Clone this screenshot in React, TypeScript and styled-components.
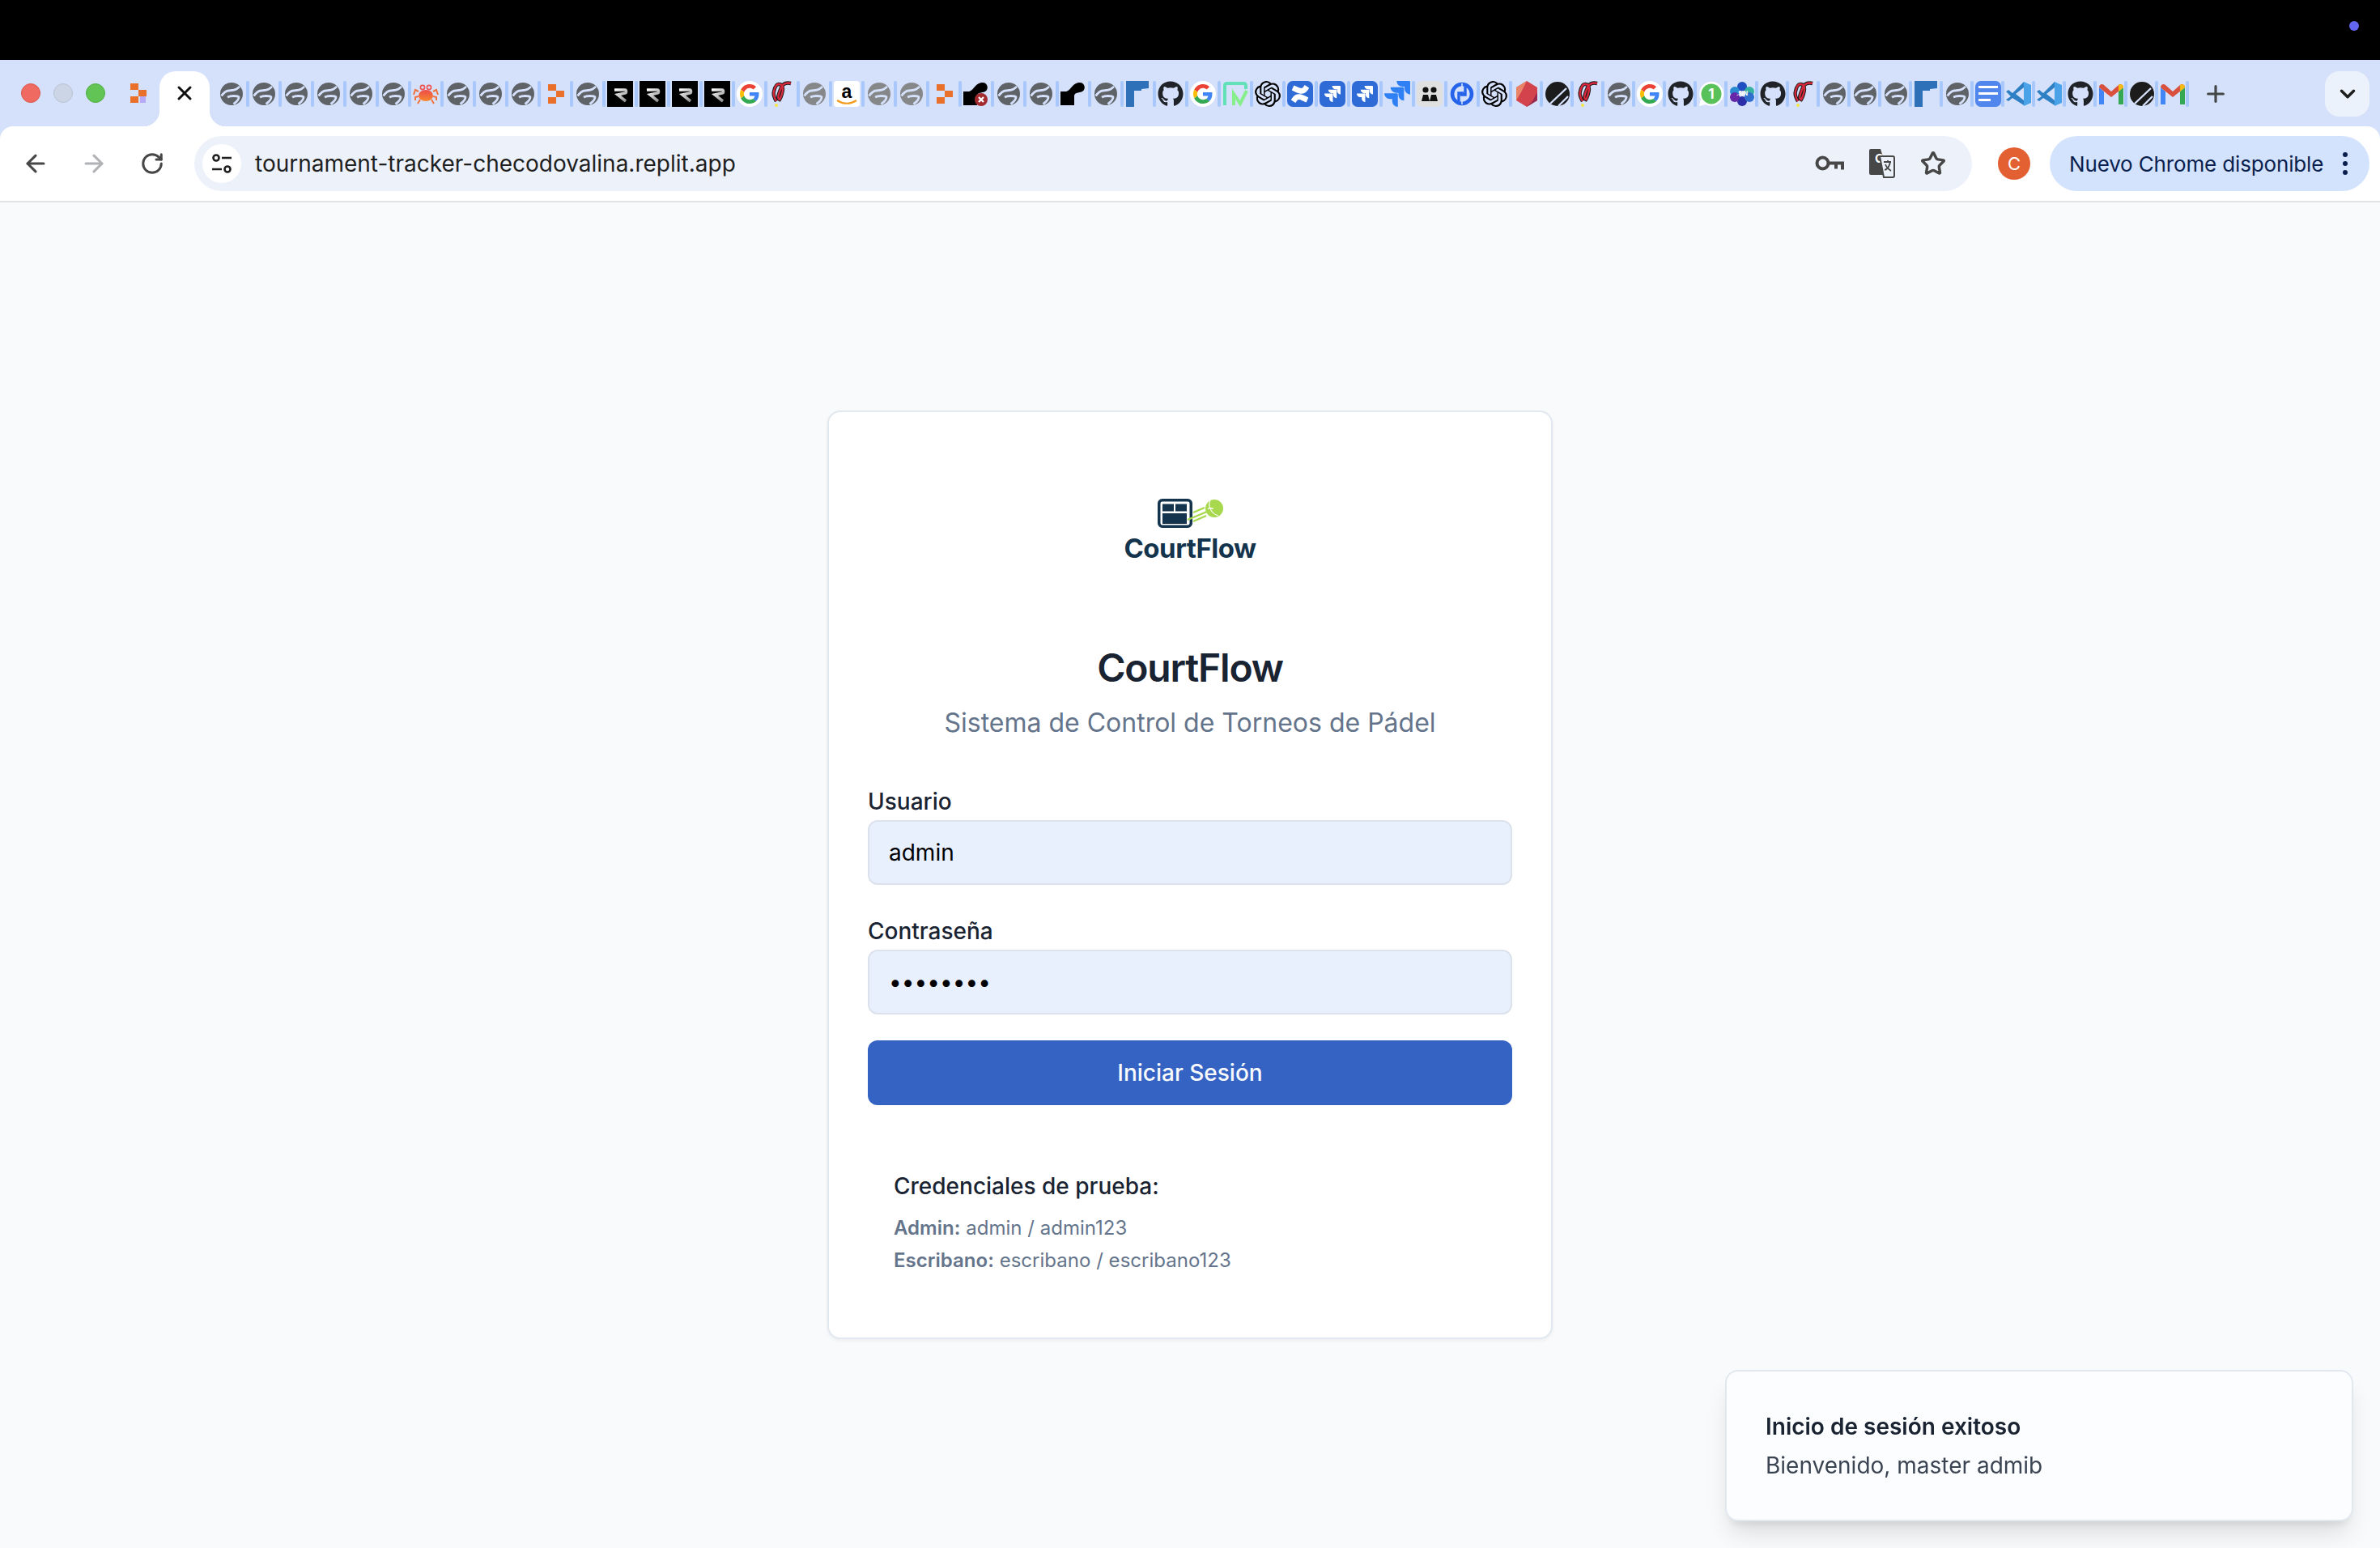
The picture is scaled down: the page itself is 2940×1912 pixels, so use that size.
import React from "react";
import styled, { createGlobalStyle } from "styled-components";
import { ArrowLeft, ArrowRight, RotateCw, Star, Plus, ChevronDown, X } from "lucide-react";
import { FaGithub } from "react-icons/fa";
import { SiOpenai, SiJira, SiConfluence } from "react-icons/si";

const GlobalStyle = createGlobalStyle`
	* {
		box-sizing: border-box;
	}
	html,
	body {
		margin: 0;
		padding: 0;
		background: #f9fafb;
		font-family: Inter, "Liberation Sans", sans-serif;
	}
`;

/* ---- favicons ---- */

const Svg = styled.svg`
	display: block;
	width: 32px;
	height: 32px;
`;

const Globe = ({ dim }: { dim?: boolean }) => (
	<Svg viewBox="0 0 32 32">
		<circle cx="16" cy="16" r="14" fill={dim ? "#858789" : "#5f6368"} />
		<path d="M3.6 18.5C6 15 9 12.5 12 12c3-.5 7 0 10-2l4-3" fill="none" stroke="#d5e1fb" strokeWidth="2.8" />
		<path d="M11 20c3-1.5 5-1.5 7.5-1.5 3 0 6 .5 6.5 1.5 0 3-3 6-6.5 8.5" fill="none" stroke="#d5e1fb" strokeWidth="2.8" />
	</Svg>
);

const Blocks = ({ lilac }: { lilac?: boolean }) => (
	<Svg viewBox="0 0 32 32">
		<rect x="7" y="4" width="10" height="8" fill="#e8702a" />
		<rect x="17" y="12" width="10" height="8" fill="#e8702a" />
		<rect x="7" y="20" width="10" height="8" fill="#e8702a" />
		{lilac && <rect x="19" y="20" width="7" height="8" fill="#b6a9f7" />}
	</Svg>
);

const Crab = () => (
	<Svg viewBox="0 0 32 32">
		<defs>
			<linearGradient id="crab" x1="0" y1="0" x2="0" y2="1">
				<stop offset="0" stopColor="#ef4b4b" />
				<stop offset="1" stopColor="#f58a2e" />
			</linearGradient>
		</defs>
		<ellipse cx="16" cy="18" rx="9" ry="7" fill="url(#crab)" />
		<circle cx="12" cy="8" r="2.6" fill="none" stroke="#ef5350" strokeWidth="1.6" />
		<circle cx="20" cy="8" r="2.6" fill="none" stroke="#ef5350" strokeWidth="1.6" />
		<path d="M7 13 3 11 1 17M25 13l4-2 2 6M7 19l-4 1v4M25 19l4 1v4M9 23l-3 5M23 23l3 5" fill="none" stroke="#f2703a" strokeWidth="2" />
	</Svg>
);

const RTile = () => (
	<Svg viewBox="0 0 32 32">
		<defs>
			<linearGradient id="rtile" x1="0" y1="0" x2="1" y2="1">
				<stop offset="0" stopColor="#ffffff" />
				<stop offset="1" stopColor="#8f8f8f" />
			</linearGradient>
		</defs>
		<rect width="32" height="32" fill="#000" />
		<path d="M9 11h13c2 0 2 4 0 4l-9 2 10 8" fill="none" stroke="url(#rtile)" strokeWidth="3.6" />
	</Svg>
);

const GoogleG = () => (
	<Svg viewBox="-8 -8 64 64">
		<circle cx="24" cy="24" r="32" fill="#fff" />
		<path fill="#EA4335" d="M24 9.5c3.54 0 6.71 1.22 9.21 3.6l6.85-6.85C35.9 2.38 30.47 0 24 0 14.62 0 6.51 5.38 2.56 13.22l7.98 6.19C12.43 13.72 17.74 9.5 24 9.5z" />
		<path fill="#4285F4" d="M46.98 24.55c0-1.57-.15-3.09-.38-4.55H24v9.02h12.94c-.58 2.96-2.26 5.48-4.78 7.18l7.73 6c4.51-4.18 7.09-10.36 7.09-17.65z" />
		<path fill="#FBBC05" d="M10.53 28.59c-.48-1.45-.76-2.99-.76-4.59s.27-3.14.76-4.59l-7.98-6.19C.92 16.46 0 20.12 0 24c0 3.88.92 7.54 2.56 10.78l7.97-6.19z" />
		<path fill="#34A853" d="M24 48c6.48 0 11.93-2.13 16.06-5.81l-7.73-6c-2.15 1.45-4.92 2.3-8.33 2.3-6.26 0-11.57-4.22-13.47-9.91l-7.98 6.19C6.51 42.62 14.62 48 24 48z" />
	</Svg>
);

const swirlPath = "M9 25C6 20 5 16 6 13 7 8 9 4 12 4c4 0 5 3 5 6s-2 10-4 13c-2-1-2-4-1-7s3-9 5-11 6-3 10-2";

const Swirl = () => (
	<Svg viewBox="0 0 32 32">
		<path d={swirlPath} fill="none" stroke="#1d1d1d" strokeWidth="4.4" />
		<path d={swirlPath} fill="none" stroke="#d8283c" strokeWidth="2.4" />
		<circle cx="9" cy="30" r="2" fill="#f5e642" />
	</Svg>
);

const Amazon = () => (
	<Svg viewBox="0 0 32 32">
		<rect width="32" height="32" rx="4" fill="#fff" />
		<text x="16" y="21" textAnchor="middle" fontSize="23" fontWeight="700" fontFamily="Liberation Sans">a</text>
		<path d="M4 24c8 5 16 5 24 0" fill="none" stroke="#f39c1f" strokeWidth="2.2" />
	</Svg>
);

const Render = ({ failed }: { failed?: boolean }) => (
	<Svg viewBox="0 0 32 32">
		<path d="M0 30V13h6c7 0 8-11 18-11 6 0 8 8 3 11-5 2-9 1-10 5v12z" fill="#000" />
		{failed && <circle cx="22" cy="23" r="8" fill="#a32a2e" />}
		{failed && <path d="M19 20l6 6M25 20l-6 6" stroke="#fff" strokeWidth="2.4" />}
	</Svg>
);

const Steps = () => (
	<Svg viewBox="0 0 32 32">
		<path d="M1 0h28v9l-9 1v2h-9v20H1z" fill="#2f71b8" />
	</Svg>
);

const Outline = () => (
	<Svg viewBox="0 0 32 32">
		<path d="M3 30V6q0-3 3-3h20q3 0 3 3v4" fill="none" stroke="#62e0b8" strokeWidth="4" />
		<path d="M14 30V16l8 12 8-16" fill="none" stroke="#86ee8a" strokeWidth="4" />
	</Svg>
);

const OpenAi = () => (
	<Svg as={SiOpenai} color="#000" />
);

const Tile = styled.div<{ $bg: string }>`
	width: 32px;
	height: 32px;
	border-radius: 7px;
	background: ${(p) => p.$bg};
	color: #fff;
	display: flex;
	align-items: center;
	justify-content: center;
`;

const People = () => (
	<Tile $bg="#e0e0e0">
		<svg width="22" height="22" viewBox="0 0 22 22">
			<circle cx="6" cy="6" r="3.6" fill="#111" />
			<circle cx="16" cy="6" r="3.6" fill="#111" />
			<path d="M1 20l2-8h6l2 8zM11 20l2-8h6l2 8z" fill="#111" />
		</svg>
	</Tile>
);

const RingG = () => (
	<Svg viewBox="0 0 32 32">
		<circle cx="16" cy="16" r="12" fill="none" stroke="#2563eb" strokeWidth="4.6" />
		<path d="M12 25v-10h6M20 7v10h-6" fill="none" stroke="#2563eb" strokeWidth="3.4" />
		<path d="M16 3v6M16 23v6" stroke="#d5e1fb" strokeWidth="1.6" />
	</Svg>
);

const Gem = () => (
	<Svg viewBox="0 0 32 32">
		<path d="M16 0 29 8v16l-13 8-13-8V8z" fill="#d2434c" />
		<path d="M16 0 3 8v16l6-10z" fill="#ea8468" />
		<path d="M29 14v10l-13 8 7-7z" fill="#962a4f" />
	</Svg>
);

const Disc = () => (
	<Svg viewBox="0 0 32 32">
		<circle cx="16" cy="16" r="15" fill="#1c1c1c" />
		<path d="M7 28 27 9M17 31l12-12" stroke="#d5e1fb" strokeWidth="2.4" />
	</Svg>
);

const Whatsapp = () => (
	<Svg viewBox="0 0 32 32">
		<path d="M1 31l2-8A15 15 0 1 1 9 29z" fill="#fff" />
		<circle cx="16" cy="16" r="12.5" fill="#58c15a" />
		<text x="16" y="22" textAnchor="middle" fontSize="17" fontWeight="700" fill="#fff" fontFamily="Inter">1</text>
	</Svg>
);

const Esim = () => (
	<Svg viewBox="0 0 32 32">
		<circle cx="16" cy="7" r="6" fill="#1f4fc0" />
		<circle cx="16" cy="25" r="6" fill="#2d2fa8" />
		<circle cx="7" cy="13" r="6" fill="#2b8ad0" />
		<circle cx="25" cy="13" r="6" fill="#35b3a0" />
		<circle cx="7" cy="20" r="6" fill="#6526a8" />
		<circle cx="25" cy="20" r="6" fill="#2e6fd0" />
		<text x="16" y="18" textAnchor="middle" fontSize="7" fontWeight="700" fill="#fff" fontFamily="Inter">.SIN</text>
	</Svg>
);

const Docs = () => (
	<Tile $bg="#5186ec">
		<svg width="24" height="22" viewBox="0 0 24 22">
			<path d="M0 1h24v3H0zM0 9h24v3H0zM0 17h15v3H0z" fill="#fff" />
		</svg>
	</Tile>
);

const VsCode = () => (
	<Svg viewBox="0 0 32 32">
		<path d="M22 1l9 4v22l-9 4z" fill="#4aa3e8" />
		<path d="M22 1 8 15l-5-4-3 2 6 6-6 4 3 2 5-4 14 9V24L12 16 22 8z" fill="#2f7fc4" />
	</Svg>
);

const Gmail = () => (
	<Svg viewBox="0 0 32 32">
		<path d="M1 29V8l6 5v16z" fill="#4285f4" />
		<path d="M25 29V13l6-5v21z" fill="#34a853" />
		<path d="M1 8c0-4 4-5 6-3l9 8 9-8c2-2 6-1 6 3l-15 12z" fill="#d9503f" />
		<path d="M25 5c2-2 6-1 6 3l-6 5z" fill="#f5bb12" />
	</Svg>
);

const icons = {
	globe: <Globe />,
	dim: <Globe dim />,
	blocks: <Blocks />,
	crab: <Crab />,
	r: <RTile />,
	g: <GoogleG />,
	swirl: <Swirl />,
	amazon: <Amazon />,
	renderX: <Render failed />,
	render: <Render />,
	steps: <Steps />,
	github: <Svg as={FaGithub} color="#1f2328" />,
	outline: <Outline />,
	openai: <OpenAi />,
	confluence: (
		<Tile $bg="#2f6bd6">
			<SiConfluence size={22} />
		</Tile>
	),
	jira: (
		<Tile $bg="#2f6bd6">
			<SiJira size={20} />
		</Tile>
	),
	jiraLight: <Svg as={SiJira} color="#2f80f5" />,
	people: <People />,
	ringG: <RingG />,
	gem: <Gem />,
	disc: <Disc />,
	whatsapp: <Whatsapp />,
	esim: <Esim />,
	docs: <Docs />,
	vscode: <VsCode />,
	gmail: <Gmail />,
};

type IconName = keyof typeof icons;

const wideTabs: IconName[] = [
	"globe", "globe", "globe", "globe", "globe", "globe", "crab", "globe", "globe", "globe",
	"blocks", "globe", "r", "r", "r", "r", "g", "swirl", "dim", "amazon",
	"dim", "dim", "blocks", "renderX", "globe", "globe", "render", "globe", "steps", "github",
	"g", "outline", "openai", "confluence", "jira", "jira", "jiraLight", "people", "ringG", "openai",
];

const narrowTabs: IconName[] = [
	"gem", "disc", "swirl", "globe", "g", "github", "whatsapp", "esim", "github", "swirl",
	"globe", "globe", "globe", "steps", "globe", "docs", "vscode", "vscode", "github", "gmail",
	"disc", "gmail",
];

/* ---- browser chrome ---- */

const TopBar = styled.div`
	height: 74px;
	background: #000;
	display: flex;
	align-items: center;
	justify-content: flex-end;
	padding: 0 26px 10px 0;
`;

const RecordingDot = styled.span`
	width: 12px;
	height: 12px;
	border-radius: 50%;
	background: #6366f1;
`;

const ChromeFrame = styled.div`
	background: #d5e1fb;
`;

const TabStrip = styled.div`
	height: 82px;
	padding-top: 14px;
	display: flex;
	align-items: flex-start;
`;

const TrafficLights = styled.div`
	display: flex;
	gap: 16px;
	margin: 15px 0 0 26px;
`;

const Light = styled.span<{ $color: string; $edge: string }>`
	width: 24px;
	height: 24px;
	border-radius: 50%;
	background: ${(p) => p.$color};
	border: 1px solid ${(p) => p.$edge};
`;

const PinnedIcon = styled.div`
	width: 30px;
	height: 32px;
	margin: 11px 0 0 24px;
`;

const ActiveTab = styled.div`
	position: relative;
	width: 62px;
	height: 68px;
	margin-left: 13px;
	background: #fff;
	border-radius: 20px 20px 0 0;
	display: flex;
	justify-content: center;
	padding-top: 13px;
	color: #111;

	&::before,
	&::after {
		content: "";
		position: absolute;
		bottom: 0;
		width: 20px;
		height: 20px;
	}
	&::before {
		left: -20px;
		background: radial-gradient(circle at 0 0, transparent 20px, #fff 20.5px);
	}
	&::after {
		right: -20px;
		background: radial-gradient(circle at 100% 0, transparent 20px, #fff 20.5px);
	}
`;

const TabRow = styled.div`
	display: flex;
	margin: 12px 0 0 11px;
`;

const TabSlot = styled.div<{ $narrow?: boolean }>`
	width: ${(p) => (p.$narrow ? 38 : 40)}px;
	height: 32px;
	display: flex;
	flex-shrink: 0;
`;

const TabDivider = styled.span<{ $narrow?: boolean }>`
	width: 4px;
	height: 32px;
	border-radius: 2px;
	margin-left: ${(p) => (p.$narrow ? 0 : 2)}px;
	background: #a8c7fa;
	flex-shrink: 0;
`;

const NewTab = styled.div`
	margin: 12px 0 0 15px;
	color: #444746;
	display: flex;
`;

const TabSearch = styled.div`
	width: 55px;
	height: 56px;
	margin-left: auto;
	margin-right: 13px;
	border-radius: 18px;
	background: #ecf2fc;
	display: flex;
	align-items: center;
	justify-content: center;
	color: #1f1f1f;
`;

const Toolbar = styled.div`
	height: 94px;
	background: #fff;
	border-radius: 16px 16px 0 0;
	border-bottom: 2px solid #e3e3e3;
	display: flex;
	align-items: center;
	padding: 0 13px 0 8px;
`;

const NavButton = styled.div<{ $muted?: boolean }>`
	width: 72px;
	display: flex;
	justify-content: center;
	color: ${(p) => (p.$muted ? "#b0b2b5" : "#474747")};
`;

const Omnibox = styled.div`
	flex: 1;
	height: 68px;
	margin-left: 16px;
	padding: 0 16px 0 10px;
	border-radius: 34px;
	background: #edf2fa;
	display: flex;
	align-items: center;
`;

const SiteChip = styled.div`
	width: 48px;
	height: 48px;
	border-radius: 50%;
	background: #fff;
	display: flex;
	align-items: center;
	justify-content: center;
`;

const Url = styled.span`
	margin-left: 17px;
	flex: 1;
	font-size: 28px;
	color: #1f1f1f;
`;

const OmniAction = styled.div`
	width: 64px;
	display: flex;
	justify-content: center;
	color: #474747;
`;

const Avatar = styled.div`
	width: 40px;
	height: 40px;
	margin-left: 32px;
	border-radius: 50%;
	background: #e36033;
	color: #fff;
	font-size: 22px;
	display: flex;
	align-items: center;
	justify-content: center;
`;

const UpdatePill = styled.div`
	width: 395px;
	height: 68px;
	margin-left: 24px;
	padding: 0 14px 0 24px;
	border-radius: 34px;
	background: #d3e3fd;
	color: #0a1f4e;
	font-size: 26px;
	letter-spacing: -0.15px;
	white-space: nowrap;
	display: flex;
	align-items: center;
	justify-content: space-between;
`;

const MenuDots = styled.span`
	display: flex;
	flex-direction: column;
	gap: 5px;
	margin-right: 13px;

	i {
		width: 6px;
		height: 6px;
		border-radius: 50%;
		background: #0a1f4e;
	}
`;

/* ---- login page ---- */

const Main = styled.main`
	height: 1661px;
	display: flex;
	align-items: center;
	justify-content: center;
	background: #f9fafb;
`;

const Card = styled.div`
	width: 896px;
	height: 1147px;
	padding: 107px 48px 0;
	background: #fff;
	border: 2px solid #e2e8f0;
	border-radius: 16px;
	box-shadow: 0 2px 4px rgba(0, 0, 0, 0.06);
`;

const LogoBlock = styled.div`
	display: flex;
	flex-direction: column;
	align-items: center;
	gap: 5px;
`;

const LogoText = styled.span`
	font-size: 33px;
	line-height: 40px;
	font-weight: 700;
	color: #14344d;
	letter-spacing: -0.5px;
`;

const Title = styled.h1`
	margin: 96px 0 0;
	text-align: center;
	font-size: 48px;
	line-height: 64px;
	font-weight: 600;
	letter-spacing: -1.2px;
	color: #1a2332;
`;

const Subtitle = styled.p`
	margin: 12px 0 0;
	text-align: center;
	font-size: 32px;
	line-height: 48px;
	color: #64748b;
`;

const Form = styled.form`
	margin-top: 53px;
`;

const Label = styled.label`
	display: block;
	font-size: 28px;
	line-height: 40px;
	font-weight: 500;
	color: #1a2332;
`;

const Input = styled.input`
	display: block;
	width: 100%;
	height: 80px;
	margin: 3px 0 37px;
	padding: 0 24px;
	border: 2px solid #dbe2ec;
	border-radius: 12px;
	background: #e8f0fe;
	color: #000;
	font-family: inherit;
	font-size: 28px;
	outline: none;
`;

const Submit = styled.button`
	display: block;
	width: 100%;
	height: 80px;
	margin-top: -5px;
	border: 0;
	border-radius: 12px;
	background: #3563c4;
	color: #f8fafc;
	font-family: inherit;
	font-size: 28px;
	font-weight: 500;
`;

const Credentials = styled.div`
	margin-top: 80px;
	padding-left: 32px;
`;

const CredentialsTitle = styled.h3`
	margin: 0 0 12px;
	font-size: 28px;
	line-height: 40px;
	font-weight: 500;
	color: #1a2332;
`;

const CredentialLine = styled.p`
	margin: 0;
	font-size: 24px;
	line-height: 40px;
	color: #64748b;
	letter-spacing: 0.02px;

	strong {
		font-weight: 600;
	}
`;

const Toast = styled.div`
	position: fixed;
	right: 33px;
	bottom: 33px;
	width: 776px;
	height: 187px;
	padding: 48px;
	background: #fcfdfe;
	border: 2px solid #e2e8f0;
	border-radius: 16px;
	box-shadow: 0 20px 30px -6px rgba(0, 0, 0, 0.12), 0 8px 12px -6px rgba(0, 0, 0, 0.1);
`;

const ToastTitle = styled.div`
	font-size: 28px;
	line-height: 40px;
	font-weight: 600;
	color: #1a2332;
`;

const ToastBody = styled.div`
	font-size: 28px;
	line-height: 56px;
	color: #3b4453;
`;

const CourtLogo = () => (
	<svg width="81" height="36" viewBox="0 0 81 36">
		<rect x="1.75" y="1.75" width="39.5" height="32.5" rx="4" fill="none" stroke="#14344d" strokeWidth="3.5" />
		<path d="M6 6.5h14v9H6zM22 6.5h14v9H22zM6 18h30v13H6z" fill="#14344d" />
		<path d="M44 17l14-6M37 26l24-10M44 28l16-7" stroke="#a8d84e" strokeWidth="2.4" />
		<circle cx="70" cy="12" r="11" fill="#a8d84e" />
		<path d="M65 2c-3 6 0 16 10 19M62 13c3-4 4 0 7-1" fill="none" stroke="#fff" strokeWidth="1.2" />
	</svg>
);

const SiteInfoIcon = () => (
	<svg width="26" height="28" viewBox="0 0 26 28" fill="none" stroke="#1f1f1f" strokeWidth="2.6">
		<circle cx="6" cy="7" r="3.5" />
		<path d="M13 7h12M1 21h12" />
		<circle cx="20" cy="21" r="3.5" />
	</svg>
);

const KeyIcon = () => (
	<svg width="36" height="20" viewBox="0 0 36 20" fill="none" stroke="#474747" strokeWidth="4">
		<circle cx="9.5" cy="9.5" r="7" />
		<path d="M17 9.5h17v8M26 9.5v7" />
	</svg>
);

const TranslateIcon = () => (
	<svg width="34" height="36" viewBox="0 0 34 36">
		<path d="M2 2a2 2 0 0 1 2-2h12l10 32H4a2 2 0 0 1-2-2z" fill="#474747" />
		<text x="9" y="17" fontSize="15" fontWeight="700" fill="#fff" fontFamily="Inter">G</text>
		<path d="M15 9h16a2 2 0 0 1 2 2v22a2 2 0 0 1-2 2H20z" fill="#edf2fa" stroke="#474747" strokeWidth="2" />
		<path d="M20 16h9M25 14v2M28 16c-1 6-4 9-7 10M22 19c1 3 4 6 7 8" fill="none" stroke="#474747" strokeWidth="1.8" />
	</svg>
);

export default function App() {
	return (
		<>
			<GlobalStyle />
			<TopBar>
				<RecordingDot />
			</TopBar>
			<ChromeFrame>
				<TabStrip>
					<TrafficLights>
						<Light $color="#ef6b61" $edge="#d9564c" />
						<Light $color="#ccd5e5" $edge="#b9c2d2" />
						<Light $color="#61c454" $edge="#4fae45" />
					</TrafficLights>
					<PinnedIcon>
						<Blocks lilac />
					</PinnedIcon>
					<ActiveTab>
						<X size={28} strokeWidth={2.6} />
					</ActiveTab>
					<TabRow>
						{wideTabs.map((name, i) => (
							<TabSlot key={i}>
								{icons[name]}
								<TabDivider />
							</TabSlot>
						))}
						{narrowTabs.map((name, i) => (
							<TabSlot key={i} $narrow>
								{icons[name]}
								<TabDivider $narrow />
							</TabSlot>
						))}
					</TabRow>
					<NewTab>
						<Plus size={32} strokeWidth={2.4} />
					</NewTab>
					<TabSearch>
						<ChevronDown size={30} strokeWidth={2.8} />
					</TabSearch>
				</TabStrip>
				<Toolbar>
					<NavButton>
						<ArrowLeft size={34} strokeWidth={2.2} />
					</NavButton>
					<NavButton $muted>
						<ArrowRight size={34} strokeWidth={2.2} />
					</NavButton>
					<NavButton>
						<RotateCw size={30} strokeWidth={2.4} />
					</NavButton>
					<Omnibox>
						<SiteChip>
							<SiteInfoIcon />
						</SiteChip>
						<Url>tournament-tracker-checodovalina.replit.app</Url>
						<OmniAction>
							<KeyIcon />
						</OmniAction>
						<OmniAction>
							<TranslateIcon />
						</OmniAction>
						<OmniAction>
							<Star size={32} strokeWidth={2.6} />
						</OmniAction>
					</Omnibox>
					<Avatar>C</Avatar>
					<UpdatePill>
						Nuevo Chrome disponible
						<MenuDots>
							<i />
							<i />
							<i />
						</MenuDots>
					</UpdatePill>
				</Toolbar>
			</ChromeFrame>
			<Main>
				<Card>
					<LogoBlock>
						<CourtLogo />
						<LogoText>CourtFlow</LogoText>
					</LogoBlock>
					<Title>CourtFlow</Title>
					<Subtitle>Sistema de Control de Torneos de Pádel</Subtitle>
					<Form>
						<Label htmlFor="user">Usuario</Label>
						<Input id="user" defaultValue="admin" />
						<Label htmlFor="pass">Contraseña</Label>
						<Input id="pass" type="password" defaultValue="admin123" />
						<Submit type="button">Iniciar Sesión</Submit>
					</Form>
					<Credentials>
						<CredentialsTitle>Credenciales de prueba:</CredentialsTitle>
						<CredentialLine>
							<strong>Admin:</strong> admin / admin123
						</CredentialLine>
						<CredentialLine>
							<strong>Escribano:</strong> escribano / escribano123
						</CredentialLine>
					</Credentials>
				</Card>
			</Main>
			<Toast>
				<ToastTitle>Inicio de sesión exitoso</ToastTitle>
				<ToastBody>Bienvenido, master admib</ToastBody>
			</Toast>
		</>
	);
}
